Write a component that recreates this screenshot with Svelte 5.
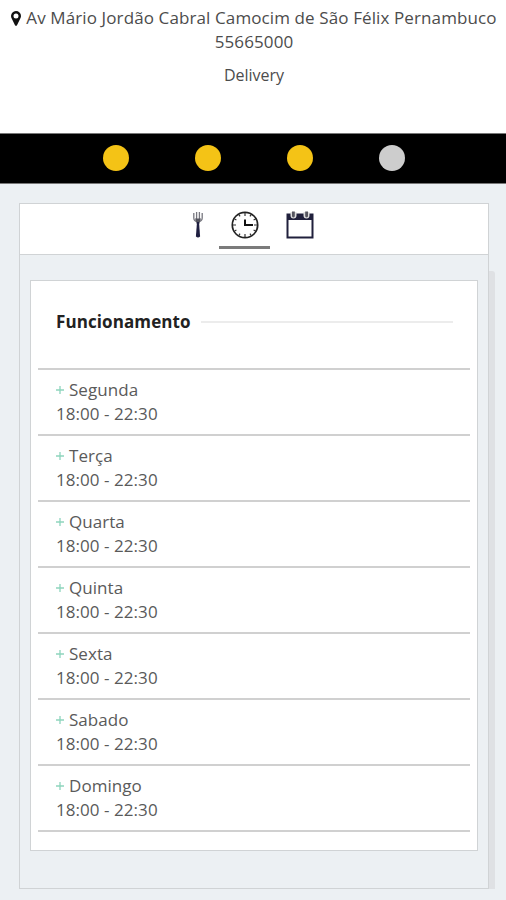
<script>
  const steps = [true, true, true, false]

  const days = ['Segunda', 'Terça', 'Quarta', 'Quinta', 'Sexta', 'Sabado', 'Domingo']
  const hours = '18:00 - 22:30'

  let tab = $state('hours')
</script>

<header>
  <div class="address">
    <svg class="pin" width="10" height="15" viewBox="0 0 10 15">
      <path
        fill="#111"
        fill-rule="evenodd"
        d="M5 0a5 5 0 0 1 5 5c0 1-.3 1.700-.6 2.300L6 14.200a1.100 1.100 0 0 1-2 0L.6 7.300A5 5 0 0 1 5 0zm0 2.500a2.500 2.500 0 1 0 0 5 2.500 2.500 0 0 0 0-5z"
      />
    </svg>
    <span>Av Mário Jordão Cabral Camocim de São Félix Pernambuco</span>
  </div>
  <div class="zip">55665000</div>
  <div class="mode">Delivery</div>
</header>

<div class="steps">
  {#each steps as done}
    <span class="dot" class:done></span>
  {/each}
</div>

<main>
  <div class="panel">
    <nav>
      <button class="fork" class:active={tab === 'menu'} onclick={() => (tab = 'menu')} aria-label="Cardápio">
        <svg width="10" height="28" viewBox="0 0 10 28">
          <path d="M.8 2v5c0 2.500 1.500 3.500 4.200 3.500S9.200 9.500 9.200 7V2M3.600 1v7M6.400 1v7" fill="none" stroke="#77777f" stroke-width="1.300" />
          <path d="M2 7.500h6L6.200 13H3.800z" fill="#55555f" />
          <path d="M4 11h2l1.100 14.500q-2.100 1.800-4.200 0z" fill="#1e1e40" />
        </svg>
      </button>
      <button class="clock" class:active={tab === 'hours'} onclick={() => (tab = 'hours')} aria-label="Horários">
        <svg width="28" height="28" viewBox="0 0 28 28">
          <circle cx="14" cy="14" r="12.700" fill="none" stroke="#222" stroke-width="1.700" />
          <path d="M14 8.500v5.500h8" fill="none" stroke="#111" stroke-width="2" />
          <path
            d="M14 2v3M14 23v3M2 14h3M23 14h3M8 3.600l1 1.800M20 3.600l-1 1.800M3.600 8l1.800 1M24.400 8l-1.800 1M3.600 20l1.800-1M24.400 20l-1.800-1M8 24.400l1-1.800M20 24.400l-1-1.800"
            stroke="#333"
            stroke-width="1.200"
          />
        </svg>
      </button>
      <button class="calendar" class:active={tab === 'events'} onclick={() => (tab = 'events')} aria-label="Agenda">
        <svg width="28" height="28" viewBox="0 0 28 28">
          <path d="M.5 2.500h27v25H.5z" fill="#20203c" />
          <path d="M2.500 9h23v16.500h-23z" fill="#fff" />
          <path d="M4.500 1v3.500a3 3 0 0 0 6 0V1zM17.500 1v3.500a3 3 0 0 0 6 0V1z" fill="#ddd" />
          <path d="M6 .5h2.800v4.500a1.400 1.400 0 0 1-2.800 0zM19.200 .5H22v4.500a1.400 1.400 0 0 1-2.800 0z" fill="#55555f" />
        </svg>
      </button>
    </nav>

    <section class="card">
      <h2>Funcionamento</h2>
      <ul>
        {#each days as day}
          <li>
            <div class="day">
              <svg width="8" height="8" viewBox="0 0 8 8">
                <path d="M4 0v8M0 4h8" stroke="#8ed5bd" stroke-width="1.300" />
              </svg>
              {day}
            </div>
            <div>{hours}</div>
          </li>
        {/each}
      </ul>
    </section>
  </div>
  <div class="track"></div>
</main>

<style>
  :global(body) {
    background: #ecf0f3;
    overflow: hidden;
  }
  :global(#app) {
    font-family: 'Open Sans', sans-serif;
    font-size: 17px;
    line-height: 24px;
    color: #5a5a5a;
  }
  header {
    box-sizing: border-box;
    height: 133px;
    padding-top: 6px;
    background: #fff;
    text-align: center;
    letter-spacing: 0.11px;
    color: #4c4c4c;
    white-space: nowrap;
  }
  .address {
    display: flex;
    justify-content: center;
    align-items: center;
    gap: 5px;
    padding-left: 2px;
  }
  .zip {
    padding-left: 2px;
  }
  .mode {
    margin-top: 9px;
    padding-left: 2px;
    font-size: 16px;
    letter-spacing: 0;
  }
  .steps {
    box-sizing: border-box;
    height: 51px;
    background: #000;
    border-top: 1px solid #777;
    border-bottom: 1px solid #777;
    display: flex;
    justify-content: center;
    align-items: center;
    gap: 66px;
    padding: 0 0 1px 1px;
  }
  .dot {
    width: 26px;
    height: 26px;
    border-radius: 50%;
    background: #cdcdcd;
  }
  .dot.done {
    background: #f4c316;
  }
  main {
    display: flex;
    padding: 19px 0 0 19px;
  }
  .panel {
    box-sizing: border-box;
    width: 470px;
    height: 686px;
    border: 1px solid #d0d3d5;
  }
  .track {
    width: 6px;
    height: 618px;
    margin-top: 68px;
    background: #dfe1e4;
    border-top-right-radius: 3px;
  }
  nav {
    box-sizing: border-box;
    height: 51px;
    background: #fff;
    border-bottom: 1px solid #d0d3d5;
    display: flex;
    justify-content: center;
    padding-right: 1px;
  }
  button {
    box-sizing: border-box;
    height: 45px;
    width: 51px;
    padding: 7px 0 0;
    border: none;
    border-bottom: 3px solid transparent;
    background: none;
    display: flex;
    justify-content: center;
    align-items: flex-start;
    cursor: pointer;
  }
  button.fork {
    width: 43px;
  }
  button.calendar {
    width: 61px;
    padding-right: 1px;
  }
  button.active {
    border-bottom-color: #7b7b7b;
  }
  .card {
    box-sizing: border-box;
    width: 448px;
    height: 571px;
    margin: 25px 0 0 10px;
    padding: 0 7px;
    background: #fff;
    border: 1px solid #d0d3d5;
  }
  h2 {
    display: flex;
    align-items: center;
    gap: 10px;
    height: 81px;
    margin: 0;
    padding: 0 17px 0 18px;
    font-size: 17px;
    font-weight: 700;
    letter-spacing: 0.1px;
    color: #222;
  }
  h2::after {
    content: '';
    flex: 1;
    height: 2px;
    background: #ececec;
  }
  ul {
    list-style: none;
    margin: 6px 0 0;
    padding: 0;
    border-bottom: 2px solid #d0d0d0;
  }
  li {
    box-sizing: border-box;
    height: 66px;
    border-top: 2px solid #d0d0d0;
    padding: 8px 0 0 18px;
    letter-spacing: 0.05px;
  }
  .day {
    display: flex;
    align-items: center;
    gap: 5px;
  }
</style>
